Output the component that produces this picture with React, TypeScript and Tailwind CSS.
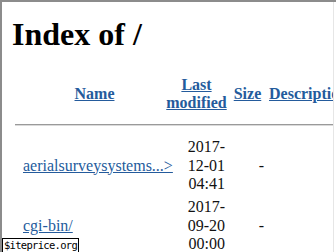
import React from 'react';

const serif = "font-['Liberation_Serif','Times_New_Roman',serif]";
const linkCls = 'text-[#245b9c] underline';
const cols = 'grid grid-cols-[11px_143px_61px_41px_100px]';

const entries = [
  { name: 'aerialsurveysystems...>', date: ['2017-', '12-01', '04:41'], size: '-' },
  { name: 'cgi-bin/', date: ['2017-', '09-20', '00:00'], size: '-' },
];

export default function App() {
  return (
    <div className={`relative w-[336px] h-[252px] overflow-hidden bg-white border-t-2 border-l-2 border-[#8c8c8c] ${serif}`}>
      <div className="w-[332px] h-full overflow-hidden border-r border-[#e6e6e6] pl-[10px] text-[16px] text-[#111]">
        {/* titulo */}
        <h1 className="mt-[16px] text-[32px] leading-[32px] font-bold text-black whitespace-nowrap">Index of /</h1>

        {/* cabecera de la tabla */}
        <div className={`${cols} mt-[26px] font-bold leading-[18.4px] w-max`}>
          <div />
          <div className="flex items-center justify-center">
            <a className={linkCls}>Name</a>
          </div>
          <div className="flex flex-col items-center">
            <a className={linkCls}>Last</a>
            <a className={linkCls}>modified</a>
          </div>
          <div className="flex items-center justify-center">
            <a className={linkCls}>Size</a>
          </div>
          <div className="flex items-center pl-[1px] whitespace-nowrap">
            <a className={linkCls}>Description</a>
          </div>
        </div>

        <div className="mt-[11px] ml-[3px] w-[330px] h-[2px] border-t border-[#9a9a9a] border-b border-b-[#dadada]" />

        {/* filas */}
        <div className="mt-[12.4px] flex flex-col gap-[4.8px] leading-[18.4px]">
          {entries.map((e) => (
            <div key={e.name} className={`${cols} w-max`}>
              <div />
              <div className="flex items-center whitespace-nowrap">
                <a className={linkCls}>{e.name}</a>
              </div>
              <div className="flex flex-col items-end pr-[2px]">
                {e.date.map((d) => (
                  <span key={d}>{d}</span>
                ))}
              </div>
              <div className="flex items-center justify-end pr-[4px]">{e.size}</div>
              <div />
            </div>
          ))}
        </div>
      </div>

      {/* marca de agua */}
      <div className="absolute left-0 bottom-0 h-[14px] w-[77px] bg-white border border-b-0 border-black pl-[1px] font-['DejaVu_Sans_Mono',monospace] text-[10.5px] tracking-[-0.7px] leading-[13px] text-black whitespace-nowrap">
        $iteprice.org
      </div>
    </div>
  );
}
